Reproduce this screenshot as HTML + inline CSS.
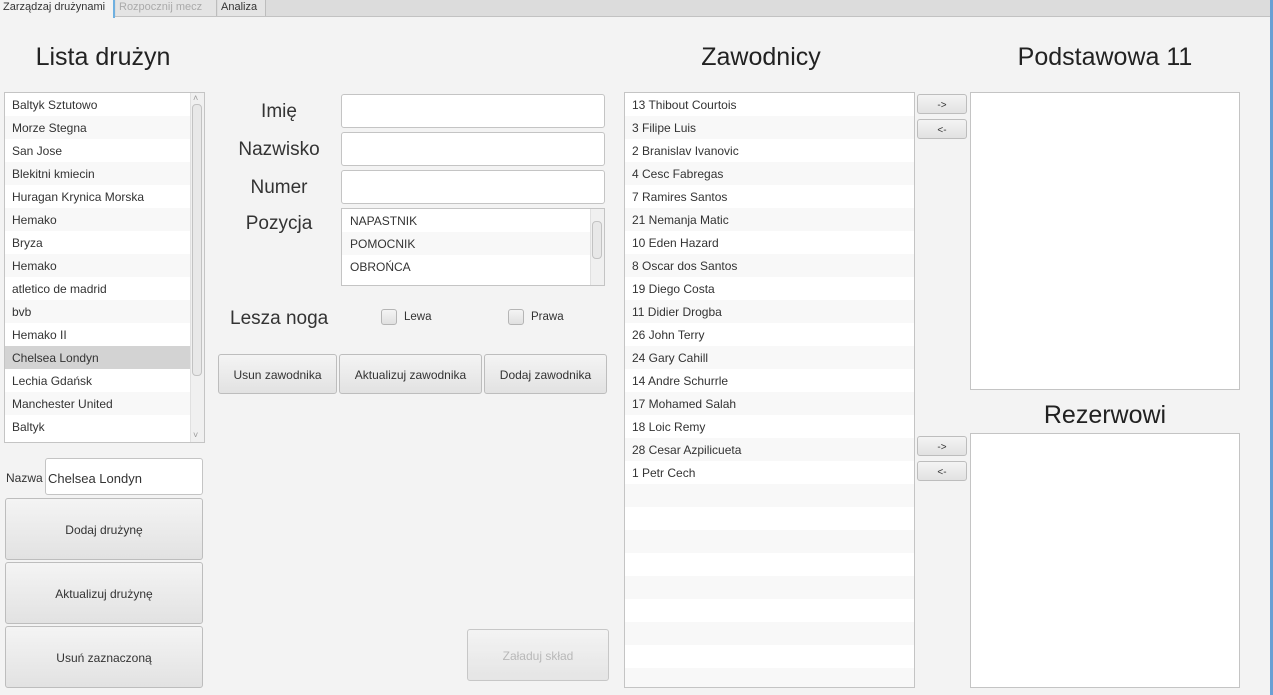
<!DOCTYPE html>
<html><head><meta charset="utf-8"><style>
*{box-sizing:border-box;margin:0;padding:0}
body{width:1273px;height:695px;background:#f3f3f3;font-family:"Liberation Sans",sans-serif;font-size:12px;color:#333;position:relative;overflow:hidden}
.a{position:absolute}
.tabbar{left:0;top:0;width:1271px;height:17px;background:#dcdcdc;border-bottom:1px solid #c2c2c2}
.tab{top:0;height:16px;font-size:11px;line-height:14px;padding:0 3px;border-right:1px solid #bdbdbd;white-space:nowrap;overflow:hidden}
.h{font-size:25px;color:#222;text-align:center;white-space:nowrap}
.list{background:#fff;border:1px solid #c4c4c4;overflow:hidden}
.list div{height:23px;line-height:25px;padding-left:7px;font-size:12px;color:#333;white-space:nowrap}
.list div:nth-child(even){background:#f8f8f8}
.list div.sel{background:#d3d3d3}
.inp{background:#fff;border:1px solid #c4c4c4;border-radius:3px}
.btn{background:linear-gradient(#f4f4f4,#e2e2e2);border:1px solid #bdbdbd;border-radius:3px;text-align:center;font-size:12px;color:#333;display:flex;align-items:center;justify-content:center;padding-top:2px}
.lbl{font-size:19px;color:#333;text-align:center}
.cb{width:16px;height:16px;border:1px solid #b5b5b5;border-radius:3px;background:linear-gradient(#f4f4f4,#e0e0e0)}
.sb{background:#f0f0f0;border-left:1px solid #e0e0e0}
.thumb{background:#e8e8e8;border:1px solid #c2c2c2;border-radius:4px}
</style></head><body>
<div class="a tabbar"></div>
<div class="a tab" style="left:0;width:115px;background:#f3f3f3;height:18px;border-right:2px solid #6fb0e0">Zarządzaj drużynami</div>
<div class="a tab" style="left:116px;width:101px;color:#aaa;background:#e4e4e4">Rozpocznij mecz</div>
<div class="a tab" style="left:218px;width:48px;background:#e4e4e4">Analiza</div>
<div class="a" style="left:1270px;top:0;width:3px;height:695px;background:#6a9fd4"></div>

<div class="a h" style="left:3px;top:43px;width:200px">Lista drużyn</div>
<div class="a h" style="left:624px;top:43px;width:274px">Zawodnicy</div>
<div class="a h" style="left:970px;top:43px;width:270px">Podstawowa 11</div>
<div class="a h" style="left:970px;top:401px;width:270px">Rezerwowi</div>

<div class="a list" style="left:4px;top:92px;width:201px;height:351px">
<div>Baltyk Sztutowo</div><div>Morze Stegna</div><div>San Jose</div><div>Blekitni kmiecin</div><div>Huragan Krynica Morska</div><div>Hemako</div><div>Bryza</div><div>Hemako</div><div>atletico de madrid</div><div>bvb</div><div>Hemako II</div><div class="sel">Chelsea Londyn</div><div>Lechia Gdańsk</div><div>Manchester United</div><div>Baltyk</div>
</div>
<div class="a sb" style="left:190px;top:93px;width:14px;height:349px"></div>
<div class="a thumb" style="left:192px;top:104px;width:10px;height:272px"></div>
<div class="a" style="left:193px;top:93px;font-size:9px;color:#999">˄</div>
<div class="a" style="left:193px;top:430px;font-size:9px;color:#999">˅</div>

<div class="a" style="left:6px;top:471px;font-size:12px">Nazwa</div>
<div class="a inp" style="left:45px;top:458px;width:158px;height:37px;font-size:13px;line-height:39px;padding-left:2px">Chelsea Londyn</div>
<div class="a btn" style="left:5px;top:498px;width:198px;height:62px">Dodaj drużynę</div>
<div class="a btn" style="left:5px;top:562px;width:198px;height:62px">Aktualizuj drużynę</div>
<div class="a btn" style="left:5px;top:626px;width:198px;height:62px">Usuń zaznaczoną</div>

<div class="a lbl" style="left:230px;top:101px;width:98px">Imię</div>
<div class="a lbl" style="left:230px;top:139px;width:98px">Nazwisko</div>
<div class="a lbl" style="left:230px;top:177px;width:98px">Numer</div>
<div class="a lbl" style="left:230px;top:213px;width:98px">Pozycja</div>
<div class="a inp" style="left:341px;top:94px;width:264px;height:34px"></div>
<div class="a inp" style="left:341px;top:132px;width:264px;height:34px"></div>
<div class="a inp" style="left:341px;top:170px;width:264px;height:34px"></div>
<div class="a list" style="left:341px;top:208px;width:264px;height:78px">
<div style="padding-left:8px">NAPASTNIK</div><div style="padding-left:8px">POMOCNIK</div><div style="padding-left:8px">OBROŃCA</div>
</div>
<div class="a sb" style="left:590px;top:209px;width:14px;height:76px"></div>
<div class="a thumb" style="left:592px;top:221px;width:10px;height:38px"></div>

<div class="a" style="left:230px;top:308px;font-size:19px">Lesza noga</div>
<div class="a cb" style="left:381px;top:309px"></div>
<div class="a" style="left:404px;top:311px;font-size:11.5px">Lewa</div>
<div class="a cb" style="left:508px;top:309px"></div>
<div class="a" style="left:531px;top:311px;font-size:11.5px">Prawa</div>

<div class="a btn" style="left:218px;top:354px;width:119px;height:40px">Usun zawodnika</div>
<div class="a btn" style="left:339px;top:354px;width:143px;height:40px">Aktualizuj zawodnika</div>
<div class="a btn" style="left:484px;top:354px;width:123px;height:40px">Dodaj zawodnika</div>
<div class="a btn" style="left:467px;top:629px;width:142px;height:52px;color:#aaa;opacity:.8">Załaduj skład</div>

<div class="a list" style="left:624px;top:92px;width:291px;height:596px">
<div>13 Thibout Courtois</div><div>3 Filipe Luis</div><div>2 Branislav Ivanovic</div><div>4 Cesc Fabregas</div><div>7 Ramires Santos</div><div>21 Nemanja Matic</div><div>10 Eden Hazard</div><div>8 Oscar dos Santos</div><div>19 Diego Costa</div><div>11 Didier Drogba</div><div>26 John Terry</div><div>24 Gary Cahill</div><div>14 Andre Schurrle</div><div>17 Mohamed Salah</div><div>18 Loic Remy</div><div>28 Cesar Azpilicueta</div><div>1 Petr Cech</div><div></div><div></div><div></div><div></div><div></div><div></div><div></div><div></div><div></div>
</div>

<div class="a btn" style="left:917px;top:94px;width:50px;height:20px;font-size:10px">-&gt;</div>
<div class="a btn" style="left:917px;top:119px;width:50px;height:20px;font-size:10px">&lt;-</div>
<div class="a btn" style="left:917px;top:436px;width:50px;height:20px;font-size:10px">-&gt;</div>
<div class="a btn" style="left:917px;top:461px;width:50px;height:20px;font-size:10px">&lt;-</div>

<div class="a list" style="left:970px;top:92px;width:270px;height:298px"></div>
<div class="a list" style="left:970px;top:433px;width:270px;height:255px"></div>
</body></html>
